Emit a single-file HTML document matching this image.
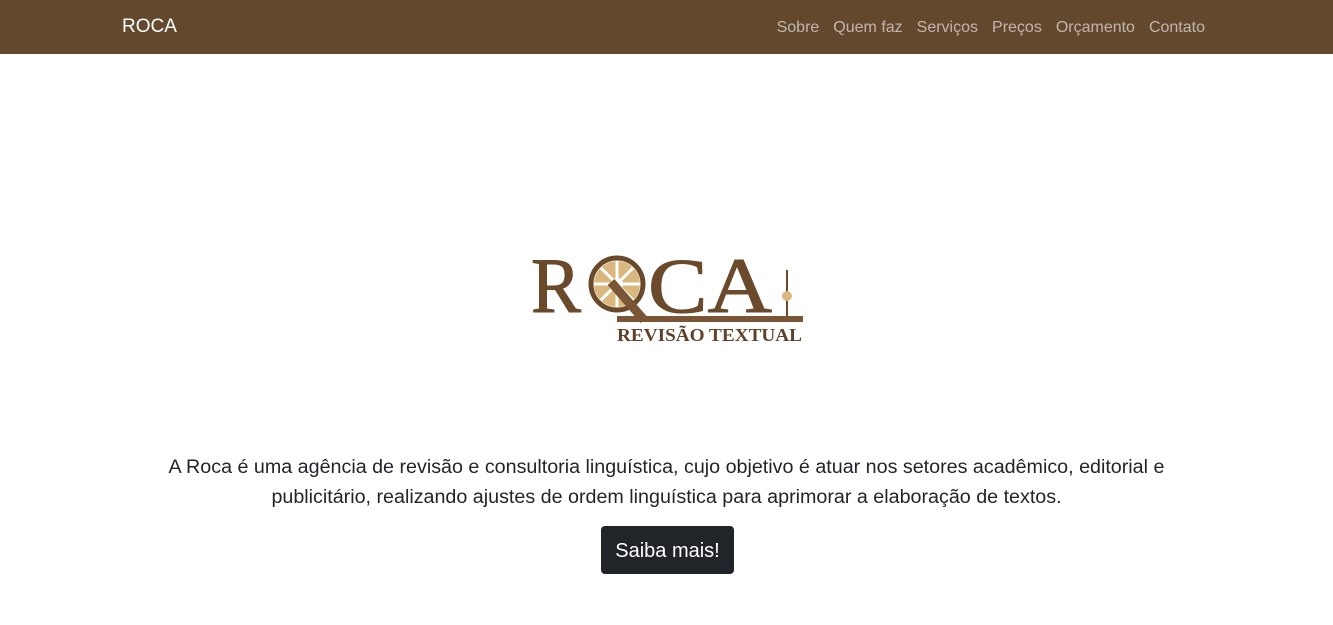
<!DOCTYPE html>
<html><head><meta charset="utf-8"><style>
body{margin:0;font-family:"Liberation Sans",sans-serif;background:#fff;color:#212529}
.nav{height:54px;background:#63482e;position:relative}
.brand{position:absolute;left:122px;top:16px;color:#fff;font-size:19px}
.links{position:absolute;right:128px;top:18px;font-size:16px;color:rgba(255,255,255,.6)}
.links span{margin-left:14px}
p{position:absolute;left:0;right:0;top:452px;margin:0;text-align:center;font-size:19.7px;line-height:30px}
.btn{position:absolute;left:601px;top:526px;width:133px;height:48px;background:#212529;color:#fff;border-radius:4px;font-size:20px;line-height:51px;text-align:center}
</style></head><body>
<div class="nav"><div class="brand">ROCA</div>
<div class="links" style="top:19px"><span>Sobre</span><span>Quem faz</span><span>Serviços</span><span>Preços</span><span>Orçamento</span><span>Contato</span></div></div>
<svg style="position:absolute;left:0;top:0" width="1333" height="400">
<text x="531" y="312" font-family="Liberation Serif" font-size="78" fill="#6b4a2c" stroke="#6b4a2c" stroke-width="1" textLength="50" lengthAdjust="spacingAndGlyphs">R</text>
<circle cx="617" cy="284" r="23" fill="#d9b77d"/>
<circle cx="617" cy="284" r="26" fill="none" stroke="#6b4a2c" stroke-width="5"/>
<circle cx="617" cy="284" r="6" fill="#fff"/>
<g stroke="#fff" stroke-width="3"><line x1="617" y1="261" x2="617" y2="307"/><line x1="594" y1="284" x2="640" y2="284"/><line x1="601" y1="268" x2="633" y2="300"/><line x1="633" y1="268" x2="601" y2="300"/></g>
<line x1="611" y1="282" x2="644" y2="320" stroke="#7b5636" stroke-width="9"/>
<text x="648" y="312" font-family="Liberation Serif" font-size="78" fill="#6b4a2c" stroke="#6b4a2c" stroke-width="1" textLength="124" lengthAdjust="spacingAndGlyphs">CA</text>
<line x1="787" y1="270" x2="787" y2="318" stroke="#6b4a2c" stroke-width="2"/>
<circle cx="787" cy="296" r="5" fill="#d9b77d"/>
<rect x="617" y="316" width="186" height="6" fill="#7b5636"/>
<text x="617" y="341" font-family="Liberation Serif" font-weight="bold" font-size="18" fill="#5e4128" textLength="185" lengthAdjust="spacingAndGlyphs">REVISÃO TEXTUAL</text>
</svg>
<p>A Roca é uma agência de revisão e consultoria linguística, cujo objetivo é atuar nos setores acadêmico, editorial e<br>publicitário, realizando ajustes de ordem linguística para aprimorar a elaboração de textos.</p>
<div class="btn">Saiba mais!</div>
</body></html>
